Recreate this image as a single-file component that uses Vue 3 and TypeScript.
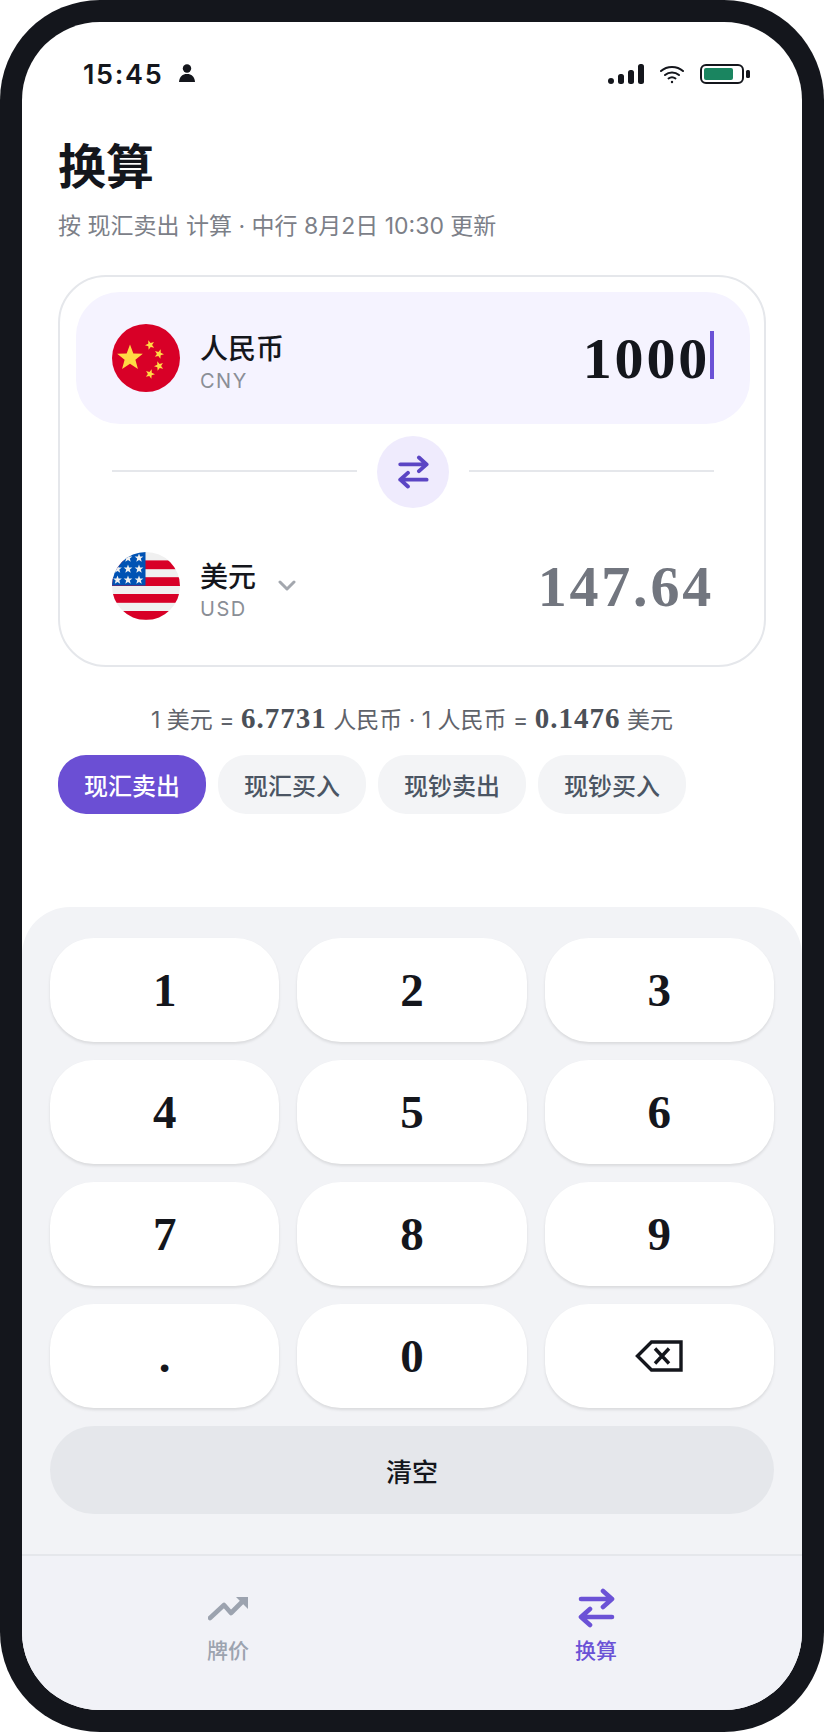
<template>
  <div class="phone">
    <div class="screen">
      <div class="status-bar">
        <div class="status-left">
          <span class="time">15:45</span>
          <svg class="person" width="16" height="18" viewBox="0 0 16 18">
            <circle cx="8" cy="4.5" r="4.2" fill="#14161c" />
            <path d="M0 18 C0.5 12.5 3.5 10 8 10 C12.5 10 15.5 12.5 16 18 Z" fill="#14161c" />
          </svg>
        </div>
        <div class="status-right">
          <svg width="36" height="20" viewBox="0 0 36 20">
            <rect x="0" y="14" width="6" height="6" rx="3" fill="#14161c" />
            <rect x="10" y="10" width="6" height="10" rx="2.5" fill="#14161c" />
            <rect x="20" y="6" width="6" height="14" rx="2.5" fill="#14161c" />
            <rect x="30" y="0" width="6" height="20" rx="2.5" fill="#14161c" />
          </svg>
          <svg width="24" height="19" viewBox="0 0 24 19" fill="none" stroke="#14161c" stroke-width="2" stroke-linecap="round">
            <path d="M1 6 C7 0.5 17 0.5 23 6" />
            <path d="M5 10 C9 6.5 15 6.5 19 10" />
            <path d="M8.5 13.5 C10.5 12 13.5 12 15.5 13.5" />
            <circle cx="12" cy="17" r="1.2" fill="#14161c" stroke="none" />
          </svg>
          <svg width="50" height="20" viewBox="0 0 50 20">
            <rect x="1" y="1" width="42" height="18" rx="5" fill="#fff" stroke="#14161c" stroke-width="2" />
            <rect x="4" y="4" width="29" height="12" rx="2" fill="#1a8560" />
            <rect x="46" y="6" width="4" height="8" rx="1.5" fill="#14161c" />
          </svg>
        </div>
      </div>

      <div class="content">
        <h1 class="title">换算</h1>
        <p class="subtitle">按 现汇卖出 计算 · 中行 8月2日 10:30 更新</p>

        <div class="card">
          <div class="row active">
            <svg class="flag" viewBox="0 0 68 68">
              <circle cx="34" cy="34" r="34" fill="#d80027" />
              <polygon :points="star(18, 34, 13.5)" fill="#ffda44" />
              <polygon :points="star(38, 21, 5, -20)" fill="#ffda44" />
              <polygon :points="star(47, 30, 5, 20)" fill="#ffda44" />
              <polygon :points="star(47, 42, 5, -20)" fill="#ffda44" />
              <polygon :points="star(38, 50, 5, 20)" fill="#ffda44" />
            </svg>
            <div class="currency">
              <span class="name">人民币</span>
              <span class="code">CNY</span>
            </div>
            <div class="amount">1000<span class="caret"></span></div>
          </div>

          <div class="divider">
            <span class="line"></span>
            <button class="swap">
              <svg width="34" height="34" viewBox="0 0 40 40" fill="none" stroke="#5b45c4" stroke-width="4.6" stroke-linecap="round" stroke-linejoin="round">
                <path d="M5 11 H36 M27 3 L36 11 L27 19" />
                <path d="M36 29 H5 M14 21 L5 29 L14 37" />
              </svg>
            </button>
            <span class="line"></span>
          </div>

          <div class="row">
            <svg class="flag" viewBox="0 0 68 68">
              <defs>
                <clipPath id="us-clip"><circle cx="34" cy="34" r="34" /></clipPath>
              </defs>
              <g clip-path="url(#us-clip)">
                <rect width="68" height="68" fill="#f0f0f0" />
                <rect v-for="y in [8.4, 25.2, 42, 59]" :key="y" x="0" :y="y" width="68" height="8.8" fill="#d80027" />
                <rect width="33.5" height="33.6" fill="#0052b4" />
                <template v-for="sy in [6, 17, 28]" :key="sy">
                  <polygon v-for="sx in [5.5, 16, 27]" :key="sx" :points="star(sx, sy, 4.6)" fill="#f0f0f0" />
                </template>
              </g>
            </svg>
            <div class="currency">
              <span class="name">美元</span>
              <span class="code">USD</span>
            </div>
            <svg class="chevron" width="18" height="12" viewBox="0 0 18 12" fill="none" stroke="#a3a7ae" stroke-width="3" stroke-linecap="round" stroke-linejoin="round">
              <path d="M2 2 L9 9 L16 2" />
            </svg>
            <div class="amount muted">147.64</div>
          </div>
        </div>

        <p class="rate">
          1 美元 = <b>6.7731</b> 人民币 · 1 人民币 = <b>0.1476</b> 美元
        </p>

        <div class="chips">
          <button v-for="(chip, i) in chips" :key="chip" class="chip" :class="{ on: i === 0 }">{{ chip }}</button>
        </div>
      </div>

      <div class="keypad">
        <div class="keys">
          <button v-for="k in keys" :key="k" class="key">{{ k }}</button>
          <button class="key">
            <svg width="48" height="32" viewBox="0 0 48 32" fill="none" stroke="#14161c" stroke-width="3.4">
              <path d="M2.5 16 L16.5 2 H46 V30 H16.5 Z" />
              <path d="M20 8.5 L34 23.5 M34 8.5 L20 23.5" />
            </svg>
          </button>
        </div>
        <button class="clear">清空</button>
      </div>

      <nav class="tabbar">
        <div class="tab">
          <svg width="40" height="40" viewBox="0 0 40 40" fill="none" stroke="#9ca3af" stroke-width="4.6" stroke-linecap="round" stroke-linejoin="round">
            <path d="M2 30 L16 17 L23 25 L35 13" />
            <path d="M28 9 H40 V21 Z" fill="#9ca3af" stroke="none" />
          </svg>
          <span>牌价</span>
        </div>
        <div class="tab current">
          <svg width="40" height="40" viewBox="0 0 40 40" fill="none" stroke="#6b52d6" stroke-width="4.6" stroke-linecap="round" stroke-linejoin="round">
            <path d="M5 11 H36 M27 3 L36 11 L27 19" />
            <path d="M36 29 H5 M14 21 L5 29 L14 37" />
          </svg>
          <span>换算</span>
        </div>
      </nav>
    </div>
  </div>
</template>

<script setup lang="ts">
const chips = ['现汇卖出', '现汇买入', '现钞卖出', '现钞买入']
const keys = ['1', '2', '3', '4', '5', '6', '7', '8', '9', '.', '0']

// five-pointed star centred on cx,cy
function star(cx: number, cy: number, r: number, rot = 0): string {
  const pts: string[] = []
  for (let i = 0; i < 10; i++) {
    const radius = i % 2 === 0 ? r : r * 0.42
    const a = ((-90 + rot + i * 36) * Math.PI) / 180
    pts.push(`${(cx + radius * Math.cos(a)).toFixed(2)},${(cy + radius * Math.sin(a)).toFixed(2)}`)
  }
  return pts.join(' ')
}
</script>

<style scoped>
.phone {
  width: 824px;
  height: 1732px;
  box-sizing: border-box;
  padding: 22px;
  background: #14161c;
  border-radius: 100px;
  font-family: Inter, "Noto Sans CJK SC", sans-serif;
}

.screen {
  height: 1688px;
  background: #fff;
  border-radius: 78px;
  overflow: hidden;
  display: flex;
  flex-direction: column;
}

.status-bar {
  display: flex;
  justify-content: space-between;
  align-items: center;
  height: 36px;
  margin-top: 34px;
  padding: 0 52px 0 61px;
}

.status-left {
  display: flex;
  align-items: center;
  gap: 16px;
}

.time {
  font-size: 27px;
  font-weight: 600;
  letter-spacing: 1.7px;
  color: #14161c;
}

.person {
  margin-top: -2px;
}

.status-right {
  display: flex;
  align-items: center;
  gap: 16px;
}

.content {
  padding: 0 36px;
}

.title {
  margin: 45px 0 0;
  font-size: 48px;
  line-height: 60px;
  font-weight: 700;
  color: #14161c;
}

.subtitle {
  margin: 13px 0 0;
  font-size: 23px;
  line-height: 32px;
  color: #7c8088;
}

.card {
  margin-top: 33px;
  height: 392px;
  box-sizing: border-box;
  padding: 15px 14px 13px 16px;
  border: 2px solid #e5e7eb;
  border-radius: 48px;
}

.row {
  display: flex;
  align-items: center;
  height: 132px;
  padding: 0 36px;
  border-radius: 44px;
}

.row.active {
  background: #f5f3ff;
}

.flag {
  width: 68px;
  height: 68px;
  flex: none;
}

.currency {
  display: flex;
  flex-direction: column;
  margin: 10px 0 0 20px;
}

.name {
  font-size: 28px;
  line-height: 36px;
  font-weight: 500;
  color: #14161c;
}

.code {
  font-size: 20px;
  line-height: 28px;
  letter-spacing: 1.5px;
  color: #8a8e96;
}

.chevron {
  margin-left: 22px;
}

.amount {
  margin-left: auto;
  display: flex;
  align-items: center;
  font-family: "Liberation Serif", serif;
  font-size: 58px;
  font-weight: 700;
  letter-spacing: 2.8px;
  color: #14161c;
}

.amount.muted {
  color: #72767f;
}

.caret {
  width: 4px;
  height: 48px;
  margin-top: -6px;
  background: #6b52d6;
}

.divider {
  display: flex;
  align-items: center;
  gap: 20px;
  margin-top: 12px;
  margin-bottom: 12px;
  padding: 0 36px;
}

.line {
  flex: 1;
  height: 2px;
  margin-top: -2px;
  background: #e5e7eb;
}

.swap {
  display: flex;
  align-items: center;
  justify-content: center;
  width: 72px;
  height: 72px;
  padding: 0;
  border: none;
  border-radius: 50%;
  background: #efebfd;
}

.rate {
  margin: 35px 0 0;
  text-align: center;
  font-size: 23px;
  line-height: 32px;
  color: #5f636b;
}

.rate b {
  font-family: "Liberation Serif", serif;
  font-size: 29px;
  font-weight: 700;
  letter-spacing: 1px;
  color: #4b5058;
}

.chips {
  display: flex;
  gap: 12px;
  margin-top: 19px;
}

.chip {
  width: 148px;
  height: 59px;
  padding: 0;
  border: none;
  border-radius: 28px;
  background: #f3f4f6;
  font: 500 24px Inter, "Noto Sans CJK SC", sans-serif;
  color: #4b5563;
}

.chip.on {
  background: #6b4fd4;
  color: #fff;
}

.keypad {
  margin-top: auto;
  padding: 31px 28px 40px;
  background: #f2f3f6;
  border-radius: 48px 48px 0 0;
}

.keys {
  display: grid;
  grid-template-columns: repeat(3, 1fr);
  grid-auto-rows: 104px;
  gap: 18px;
}

.key {
  display: flex;
  align-items: center;
  justify-content: center;
  padding: 0;
  border: none;
  border-radius: 44px;
  background: #fff;
  box-shadow: 0 2px 3px rgba(0, 0, 0, 0.1);
  font: 700 47px "Liberation Serif", serif;
  color: #14161c;
}

.clear {
  display: block;
  width: 100%;
  height: 88px;
  margin-top: 18px;
  border: none;
  border-radius: 44px;
  background: #e5e7eb;
  font: 500 26px Inter, "Noto Sans CJK SC", sans-serif;
  color: #14161c;
}

.tabbar {
  display: flex;
  height: 156px;
  box-sizing: border-box;
  padding: 32px 22px 0;
  border-top: 2px solid #e5e7eb;
  background: #f1f2f7;
}

.tab {
  flex: 1;
  display: flex;
  flex-direction: column;
  align-items: center;
  gap: 9px;
  font-size: 21px;
  line-height: 28px;
  font-weight: 500;
  color: #9ca3af;
}

.tab.current {
  color: #6b52d6;
}
</style>

<style>
html,
body {
  background: #fff;
}
</style>
